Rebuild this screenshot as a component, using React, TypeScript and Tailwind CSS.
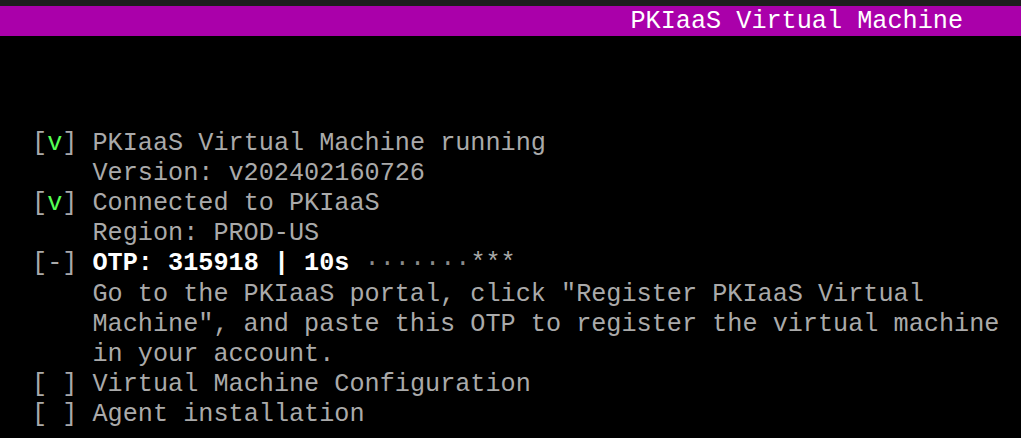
const mono = { fontFamily: '"Liberation Mono", "DejaVu Sans Mono", monospace' };

function Check({ mark }: { mark: "v" | "-" | " " }) {
  return (
    <span>
      [{mark === "v" ? <span className="text-[#55ff55]">v</span> : mark}]{" "}
    </span>
  );
}

export default function App() {
  return (
    <div
      className="h-[438px] w-[1021px] overflow-hidden bg-black text-[25.2px] leading-[30.2px] text-[#aaaaaa]"
      style={mono}
    >
      <div className="h-[6px] bg-[#1e1e1e]" />
      <div className="flex h-[30px] items-center justify-end bg-[#aa00aa] pr-[58px] pt-[3px] text-white">
        PKIaaS Virtual Machine
      </div>

      <div className="whitespace-pre pl-[32px] pt-[92.6px]">
        <div>
          <Check mark="v" />
          PKIaaS Virtual Machine running
        </div>
        <div>    Version: v202402160726</div>
        <div>
          <Check mark="v" />
          Connected to PKIaaS
        </div>
        <div>    Region: PROD-US</div>
        <div>
          <Check mark="-" />
          <span className="font-bold text-white">OTP: 315918 | 10s </span>
          <span className="text-[#8a8a8a]">·······</span>
          <span className="text-[#aaaaaa]">***</span>
        </div>
        <div>    Go to the PKIaaS portal, click "Register PKIaaS Virtual</div>
        <div>    Machine", and paste this OTP to register the virtual machine</div>
        <div>    in your account.</div>
        <div>
          <Check mark=" " />
          Virtual Machine Configuration
        </div>
        <div>
          <Check mark=" " />
          Agent installation
        </div>
      </div>
    </div>
  );
}
